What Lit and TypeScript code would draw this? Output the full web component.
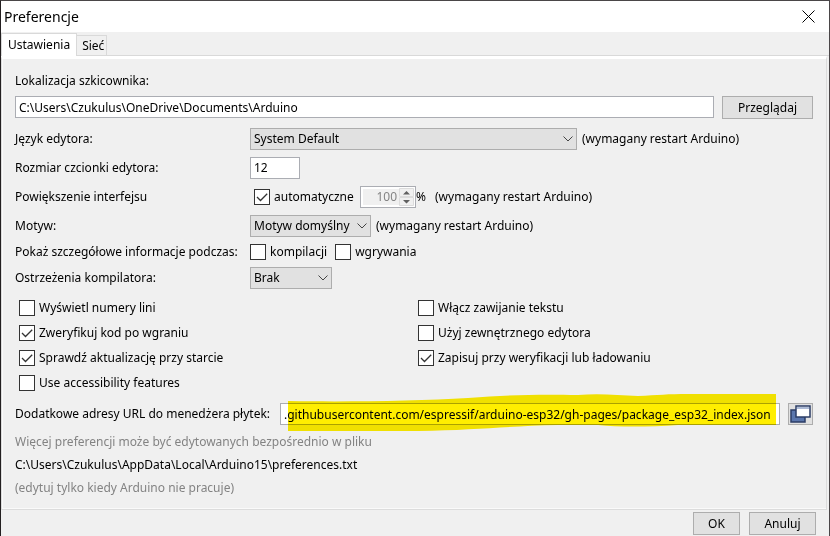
import { LitElement, html, css, svg } from "lit";
import { customElement, property } from "lit/decorators.js";

interface Option {
  label: string;
  checked: boolean;
}

const LEFT_OPTIONS: Option[] = [
  { label: "Wyświetl numery lini", checked: false },
  { label: "Zweryfikuj kod po wgraniu", checked: true },
  { label: "Sprawdź aktualizację przy starcie", checked: true },
  { label: "Use accessibility features", checked: false },
];

const RIGHT_OPTIONS: Option[] = [
  { label: "Włącz zawijanie tekstu", checked: false },
  { label: "Użyj zewnętrznego edytora", checked: false },
  { label: "Zapisuj przy weryfikacji lub ładowaniu", checked: true },
];

@customElement("check-option")
class CheckOption extends LitElement {
  @property() label = "";
  @property({ type: Boolean }) checked = false;

  static styles = css`
    :host {
      display: inline-flex;
    }
    .option {
      display: flex;
      align-items: center;
      gap: 4px;
      white-space: nowrap;
    }
    .box {
      display: grid;
      width: 16px;
      height: 16px;
    }
    .input,
    .tick {
      grid-area: 1 / 1;
      box-sizing: border-box;
      width: 16px;
      height: 16px;
      margin: 0;
    }
    .input {
      appearance: none;
      border: 1px solid #333;
      background: #fff;
    }
    .tick {
      fill: none;
      stroke: #333;
      stroke-width: 1.3;
      pointer-events: none;
      visibility: hidden;
    }
    .input:checked + .tick {
      visibility: visible;
    }
  `;

  render() {
    return html`<label class="option">
      <span class="box">
        <input class="input" type="checkbox" .checked=${this.checked} />
        <svg class="tick" viewBox="0 0 16 16"><path d="M3 8L6.5 11.5L13.2 4.8" /></svg>
      </span>
      <span>${this.label}</span>
    </label>`;
  }
}

@customElement("drop-down")
class DropDown extends LitElement {
  @property() value = "";
  @property() name = "";

  static styles = css`
    :host {
      display: grid;
      align-items: center;
    }
    .select,
    .arrow {
      grid-area: 1 / 1;
    }
    .select {
      appearance: none;
      box-sizing: border-box;
      width: 100%;
      height: 22px;
      margin: 0;
      padding: 0 18px 0 3px;
      border: 1px solid #adadad;
      border-radius: 0;
      background: #e1e1e1;
      color: #000;
      font: inherit;
    }
    .arrow {
      justify-self: end;
      width: 10px;
      height: 6px;
      margin-right: 4px;
      fill: none;
      stroke: #444;
      pointer-events: none;
    }
  `;

  render() {
    return html`<select class="select" aria-label=${this.name}>
        <option>${this.value}</option>
      </select>
      <svg class="arrow" viewBox="0 0 10 6"><path d="M.5 .5L5 5L9.500 .5" /></svg>`;
  }
}

@customElement("app-root")
class AppRoot extends LitElement {
  static styles = css`
    :host {
      display: block;
      box-sizing: border-box;
      min-height: 100vh;
      border: 1px solid #4a4648;
      border-left-color: #231f20;
      border-bottom: 0;
      background: #f0f0f0;
      color: #000;
      font: 12px/16px "Noto Sans", sans-serif;
    }
    .titlebar {
      display: flex;
      align-items: center;
      justify-content: space-between;
      height: 31px;
      padding: 0 14px 0 3px;
      background: #fff;
    }
    .title {
      margin: 0;
      font: 14px/20px "Noto Sans", sans-serif;
    }
    .close {
      display: grid;
      padding: 0;
      border: 0;
      background: none;
    }
    .close-icon {
      width: 13px;
      height: 13px;
      stroke: #000;
    }
    .tabs {
      display: flex;
      align-items: flex-end;
      height: 23px;
      border-bottom: 1px solid #d9d9d9;
    }
    .tab {
      box-sizing: border-box;
      height: 20px;
      margin: 0;
      padding: 0 2px 0 5px;
      border: 1px solid #d9d9d9;
      border-bottom: 0;
      border-left: 0;
      background: #f0f0f0;
      color: #000;
      font: inherit;
    }
    .tab.active {
      height: 23px;
      margin-bottom: -1px;
      padding: 0 6px;
      border-left: 1px solid #d9d9d9;
      background: #fff;
    }
    .panel {
      margin-right: 2px;
      padding: 11px 13px 10px;
      border: 1px solid #dcdcdc;
      border-top: 3px solid #fff;
      box-shadow: inset 1px 0 #fafafa, inset 0 -1px #fafafa;
    }
    .row {
      display: flex;
      align-items: center;
    }
    .caption {
      display: block;
      line-height: 22px;
    }
    .location {
      align-items: flex-start;
      gap: 8px;
      margin: 4px 0 5px;
    }
    .text {
      box-sizing: border-box;
      width: 50px;
      height: 22px;
      min-width: 0;
      margin: 0;
      padding: 0 3px;
      border: 1px solid #abadb3;
      background: #fff;
      color: #000;
      font: inherit;
    }
    .text.wide {
      flex: 1;
    }
    .button {
      box-sizing: border-box;
      height: 23px;
      margin: 0;
      padding: 0;
      border: 1px solid #adadad;
      background: #e1e1e1;
      color: #000;
      font: inherit;
    }
    .browse {
      width: 91px;
    }
    .form {
      display: grid;
      grid-template-columns: 235px 1fr;
      grid-template-rows: repeat(4, 29px) 23px 29px;
      align-items: center;
      white-space: nowrap;
    }
    .language {
      width: 327px;
    }
    .theme {
      width: 121px;
    }
    .warnings {
      width: 82px;
    }
    .note {
      margin-left: 5px;
    }
    .auto {
      width: 106px;
      padding-left: 4px;
    }
    .spinner {
      display: flex;
      box-sizing: border-box;
      width: 56px;
      height: 22px;
      padding: 1px;
      border: 1px solid #abadb3;
      background: #fff;
    }
    .number {
      flex: 1;
      min-width: 0;
      margin: 1px 0 1px 1px;
      padding: 0 2px;
      border: 0;
      background: #f0f0f0;
      color: #838383;
      font: inherit;
      text-align: right;
    }
    .steps {
      width: 15px;
      height: 18px;
    }
    .percent {
      width: 14px;
    }
    .toggles {
      gap: 8px;
    }
    .options {
      display: grid;
      grid-template-columns: 1fr 1fr;
      column-gap: 4px;
      margin: 3px 0 8px;
      padding-left: 4px;
    }
    .column {
      display: grid;
      grid-auto-rows: 25px;
      align-content: start;
      align-items: center;
    }
    .urls {
      margin-bottom: 5px;
    }
    .urls-label {
      width: 265px;
      white-space: nowrap;
    }
    .marked {
      display: flex;
      flex: 1;
      position: relative;
    }
    .marker {
      position: absolute;
      top: -9px;
      left: 8px;
      width: calc(100% - 12px);
      height: 38px;
      fill: #ffee00;
      mix-blend-mode: multiply;
      pointer-events: none;
    }
    .expand {
      display: grid;
      place-items: center;
      width: 25px;
      height: 22px;
      margin-left: 8px;
    }
    .windows {
      width: 21px;
      height: 18px;
    }
    .line {
      margin: 0;
      line-height: 23px;
    }
    .muted {
      color: #838383;
    }
    .actions {
      display: flex;
      justify-content: flex-end;
      gap: 9px;
      padding: 2px 13px 0 0;
    }
    .ok {
      width: 47px;
    }
    .cancel {
      width: 67px;
    }
  `;

  private options(list: Option[]) {
    return html`<div class="column">
      ${list.map((o) => html`<check-option .label=${o.label} .checked=${o.checked}></check-option>`)}
    </div>`;
  }

  render() {
    return html`
      <header class="titlebar">
        <h1 class="title">Preferencje</h1>
        <button class="close" aria-label="Zamknij">
          <svg class="close-icon" viewBox="0 0 13 13"><path d="M.5 .5L12.500 12.500M12.500 .5L.5 12.500" /></svg>
        </button>
      </header>
      <nav class="tabs" role="tablist">
        <button class="tab active" role="tab" aria-selected="true">Ustawienia</button>
        <button class="tab" role="tab" aria-selected="false">Sieć</button>
      </nav>
      <main class="panel">
        <label class="caption" for="location">Lokalizacja szkicownika:</label>
        <div class="row location">
          <input class="text wide" id="location" value="C:\\Users\\Czukulus\\OneDrive\\Documents\\Arduino" />
          <button class="button browse">Przeglądaj</button>
        </div>
        <div class="form">
          <span>Język edytora:</span>
          <div class="row">
            <drop-down class="language" name="Język edytora" value="System Default"></drop-down>
            <span class="note">(wymagany restart Arduino)</span>
          </div>
          <label for="size">Rozmiar czcionki edytora:</label>
          <div class="row"><input class="text" id="size" value="12" /></div>
          <label for="scale">Powiększenie interfejsu</label>
          <div class="row">
            <check-option class="auto" label="automatyczne" checked></check-option>
            <span class="spinner">
              <input class="number" id="scale" value="100" disabled />
              <svg class="steps" viewBox="0 0 15 18">
                ${svg`<path d="M.5 .5H14.500V8.500H.5ZM.5 9.500H14.500V17.500H.5Z" fill="#f0f0f0" stroke="#dcdcdc" />
                <path d="M4 6.500L7.500 3L11 6.500ZM4 12L7.500 15.500L11 12Z" fill="#606060" />`}
              </svg>
            </span>
            <span class="percent">%</span>
            <span class="note">(wymagany restart Arduino)</span>
          </div>
          <span>Motyw:</span>
          <div class="row">
            <drop-down class="theme" name="Motyw" value="Motyw domyślny"></drop-down>
            <span class="note">(wymagany restart Arduino)</span>
          </div>
          <span>Pokaż szczegółowe informacje podczas:</span>
          <div class="row toggles">
            <check-option label="kompilacji"></check-option>
            <check-option label="wgrywania"></check-option>
          </div>
          <span>Ostrzeżenia kompilatora:</span>
          <div class="row">
            <drop-down class="warnings" name="Ostrzeżenia kompilatora" value="Brak"></drop-down>
          </div>
        </div>
        <div class="options">${this.options(LEFT_OPTIONS)} ${this.options(RIGHT_OPTIONS)}</div>
        <div class="row urls">
          <label class="urls-label" for="urls">Dodatkowe adresy URL do menedżera płytek:</label>
          <div class="marked">
            <input
              class="text wide"
              id="urls"
              value=".githubusercontent.com/espressif/arduino-esp32/gh-pages/package_esp32_index.json"
            />
            <svg class="marker" viewBox="0 0 488 38" preserveAspectRatio="none">
              <path
                d="M0 7C60 8 130 7 180 4C220 1 250 0 290 1C310 -1 330 1 350 2C370 1 380 0 400 0H488V31H390C360 33 330 33 310 31H270C220 32 190 36 130 37H0Z"
              />
            </svg>
          </div>
          <button class="button expand" aria-label="Otwórz listę adresów">
            <svg class="windows" viewBox="0 0 21 18">
              <rect x="1" y="5" width="14" height="12" fill="#5a76ad" stroke="#2b3d66" stroke-width="1.500" />
              <rect x="6" y="1" width="14" height="11" fill="#fff" stroke="#2b3d66" stroke-width="1.500" />
              <path d="M7 3H19" stroke="#5a76ad" />
            </svg>
          </button>
        </div>
        <p class="line muted">Więcej preferencji może być edytowanych bezpośrednio w pliku</p>
        <p class="line">C:\\Users\\Czukulus\\AppData\\Local\\Arduino15\\preferences.txt</p>
        <p class="line muted">(edytuj tylko kiedy Arduino nie pracuje)</p>
      </main>
      <footer class="actions">
        <button class="button ok">OK</button>
        <button class="button cancel">Anuluj</button>
      </footer>
    `;
  }
}
